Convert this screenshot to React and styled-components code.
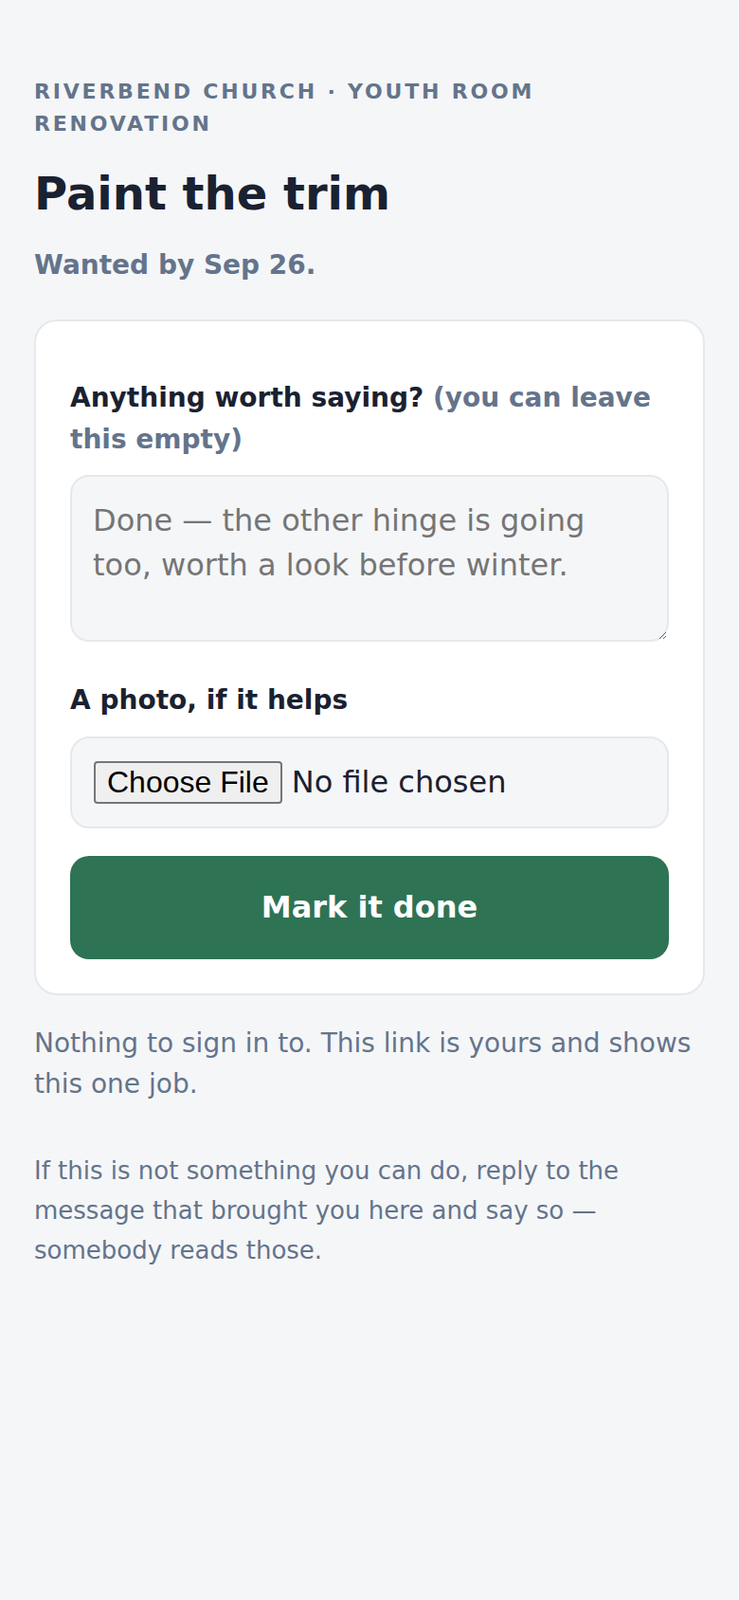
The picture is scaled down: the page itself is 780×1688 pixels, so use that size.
import React from "react";
import styled, { createGlobalStyle } from "styled-components";

const GlobalStyle = createGlobalStyle`
	html, body {
		margin: 0;
		padding: 0;
		background-color: #f5f6f8;
	}
	body {
		font-family: "DejaVu Sans", "Noto Sans", sans-serif;
		color: #1a2130;
	}
	* {
		box-sizing: border-box;
	}
`;

const Page = styled.main`
	padding: 80px 36px 80px 36px;
	min-height: 1688px;
`;

const Eyebrow = styled.p`
	margin: 0;
	font-size: 22px;
	font-weight: 700;
	line-height: 34px;
	letter-spacing: 2.8px;
	text-transform: uppercase;
	color: #64748b;
`;

const Title = styled.h1`
	margin: 26px 0 24px 0;
	font-size: 48px;
	font-weight: 700;
	line-height: 60px;
	color: #1a2130;
`;

const Due = styled.p`
	margin: 0 0 36px 0;
	font-size: 28px;
	font-weight: 700;
	line-height: 1.55;
	color: #64748b;
`;

const Card = styled.form`
	display: flex;
	flex-direction: column;
	background-color: #fff;
	border: 2px solid #e5e8ec;
	border-radius: 24px;
	padding: 59px 36px 36px 36px;
`;

const Field = styled.div`
	display: flex;
	flex-direction: column;
	margin-bottom: ${(p) => p.gap || 0}px;
`;

const Label = styled.label`
	font-size: 28px;
	font-weight: 700;
	line-height: 1.55;
	color: #1a2130;
	margin-bottom: 16px;
`;

const Hint = styled.span`
	color: #64748b;
`;

const NoteArea = styled.textarea`
	display: block;
	width: 100%;
	height: 176px;
	margin: 0;
	padding: 23px 22px 20px 22px;
	border: 2px solid #e5e8ec;
	border-radius: 20px;
	background-color: #f5f6f8;
	font-family: "DejaVu Sans", sans-serif;
	font-size: 32px;
	line-height: 1.45;
	color: #1a2130;
	&::placeholder {
		color: #757575;
	}
`;

const FileBox = styled.div`
	background-color: #f5f6f8;
	border: 2px solid #e5e8ec;
	border-radius: 20px;
	padding: 24px 23px;
`;

const FileInput = styled.input`
	display: block;
	font-family: "DejaVu Sans", sans-serif;
	font-size: 32px;
	color: #1a2130;
	&::file-selector-button {
		font-family: "Liberation Sans", Arial, sans-serif;
		font-size: 32px;
		color: #000;
		background-color: #efefef;
		border: 2px solid #767676;
		border-radius: 4px;
		padding: 2px 12px;
		margin: 0 10px 0 0;
	}
`;

const DoneButton = styled.button`
	width: 100%;
	height: 109px;
	margin-top: 29px;
	border: none;
	border-radius: 20px;
	background-color: #2e7354;
	color: #fff;
	font-family: "DejaVu Sans", sans-serif;
	font-size: 32px;
	font-weight: 700;
	cursor: pointer;
`;

const Note = styled.p`
	margin: ${(p) => p.top}px 0 0 0;
	font-size: ${(p) => p.size}px;
	line-height: ${(p) => p.lh};
	color: #64748b;
`;

export default function App() {
	return (
		<>
			<GlobalStyle />
			<Page>
				<Eyebrow>Riverbend Church · Youth Room Renovation</Eyebrow>
				<Title>Paint the trim</Title>
				<Due>Wanted by Sep 26.</Due>
				<Card onSubmit={(e) => e.preventDefault()}>
					<Field gap={40}>
						<Label htmlFor="note">
							Anything worth saying? <Hint>(you can leave this empty)</Hint>
						</Label>
						<NoteArea
							id="note"
							placeholder="Done — the other hinge is going too, worth a look before winter."
						/>
					</Field>
					<Field>
						<Label htmlFor="photo">A photo, if it helps</Label>
						<FileBox>
							<FileInput id="photo" type="file" accept="image/*" />
						</FileBox>
					</Field>
					<DoneButton type="submit">Mark it done</DoneButton>
				</Card>
				<Note top={29} size={28} lh={1.55}>
					Nothing to sign in to. This link is yours and shows this one job.
				</Note>
				<Note top={50} size={26} lh={1.6}>
					If this is not something you can do, reply to the message that brought you here and say so — somebody reads those.
				</Note>
			</Page>
		</>
	);
}
